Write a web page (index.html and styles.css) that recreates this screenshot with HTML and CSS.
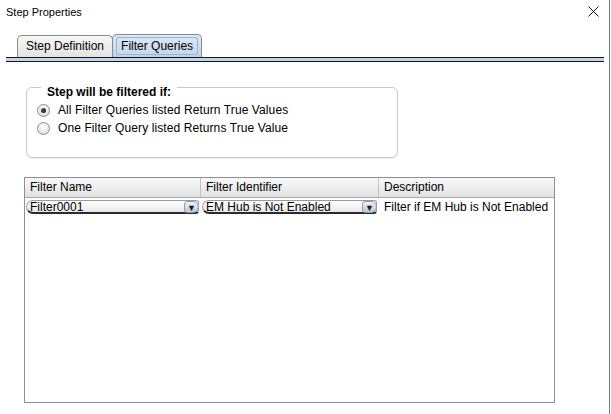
FILE: index.html
```html
<!DOCTYPE html>
<html lang="en">
<head>
    <meta charset="UTF-8">
    <title>Step Properties</title>
    <link rel="stylesheet" href="styles.css">
</head>
<body>
    <div class="janela">
        <div class="titulo">
            <span>Step Properties</span>
            <svg class="fechar" width="11" height="11" viewBox="0 0 11 11">
                <path d="M0.5 0.5 L10.5 10.5 M10.5 0.5 L0.5 10.5" stroke="#111" stroke-width="1" fill="none"/>
            </svg>
        </div>

        <div class="abas">
            <div class="aba">Step Definition</div>
            <div class="aba ativa"><span class="foco">Filter Queries</span></div>
        </div>
        <div class="linha-abas"></div>

        <div class="conteudo">
            <div class="grupo">
                <span class="legenda">Step will be filtered if:</span>
                <label class="opcao"><span class="radio marcado"></span>All Filter Queries listed Return True Values</label>
                <label class="opcao"><span class="radio"></span>One Filter Query listed Returns True Value</label>
            </div>

            <div class="tabela">
                <div class="cabecalho">
                    <div class="col">Filter Name</div>
                    <div class="col">Filter Identifier</div>
                    <div class="col">Description</div>
                </div>
                <div class="linha">
                    <div class="celula">
                        <div class="combo"><span class="valor">Filter0001</span><span class="seta">&#9660;</span></div>
                    </div>
                    <div class="celula">
                        <div class="combo"><span class="valor">EM Hub is Not Enabled</span><span class="seta">&#9660;</span></div>
                    </div>
                    <div class="celula texto">Filter if EM Hub is Not Enabled</div>
                </div>
            </div>
        </div>
    </div>
</body>
</html>
```

FILE: styles.css
```css
body {
    margin: 0;
    background: #fff;
    font-family: 'Liberation Sans', Arial, sans-serif;
    font-size: 12px;
    color: #000;
}

.janela {
    width: 609px;
    height: 414px;
    border-right: 1px solid #7a7a7a;
    background: #fff;
}

.titulo {
    height: 26px;
    padding: 0 10px 0 6px;
    display: flex;
    align-items: center;
    justify-content: space-between;
    font-size: 11px;
    box-sizing: border-box;
}

.titulo span {
    margin-top: -2px;
}

.fechar {
    margin-top: -3px;
}

.abas {
    display: flex;
    align-items: flex-end;
    height: 23px;
    margin-top: 8px;
    padding-left: 17px;
}

.aba {
    height: 22px;
    line-height: 21px;
    padding: 0 8px;
    border: 1px solid #8c8c8c;
    border-bottom: none;
    border-radius: 5px 5px 0 0;
    background: linear-gradient(#f7f7f7, #e3e3e3);
    box-sizing: border-box;
}

.aba.ativa {
    height: 23px;
    padding: 2px 3px 0 3px;
    margin-left: -1px;
    background: linear-gradient(#dde9f5, #bfd3e8);
    border-color: #7f8c99;
}

.foco {
    display: block;
    height: 18px;
    line-height: 16px;
    padding: 0 4px;
    border: 1px solid #9ab5d2;
    border-radius: 2px;
    box-sizing: border-box;
    background: linear-gradient(#d9e6f3, #c6d8ea);
}

.linha-abas {
    height: 3px;
    margin: 0 5px 0 6px;
    border-top: 1px solid #14161c;
    border-bottom: 1px solid #14161c;
    background: #c2d5e8;
}

.conteudo {
    padding: 25px 0 0 24px;
}

.grupo {
    position: relative;
    width: 372px;
    height: 71px;
    margin-left: 2px;
    padding: 13px 0 0 10px;
    border: 1px solid #c9c9c9;
    border-radius: 6px;
    box-sizing: border-box;
    box-shadow: 0 1px 1px #ececec;
}

.legenda {
    position: absolute;
    top: -3px;
    left: 14px;
    padding: 0 6px;
    line-height: 14px;
    font-weight: bold;
    background: #fff;
}

.opcao {
    display: flex;
    align-items: center;
    height: 18px;
    gap: 8px;
    letter-spacing: 0.1px;
}

.radio {
    width: 13px;
    height: 13px;
    border-radius: 50%;
    border: 1px solid #8d8d8d;
    box-sizing: border-box;
    background: radial-gradient(circle at 50% 35%, #ffffff, #e4e4e4 70%, #cfcfcf);
    position: relative;
}

.radio.marcado::after {
    content: '';
    position: absolute;
    left: 3px;
    top: 3px;
    width: 5px;
    height: 5px;
    border-radius: 50%;
    background: radial-gradient(circle at 40% 35%, #4a5562, #111);
}

.tabela {
    width: 529px;
    height: 224px;
    margin-top: 19px;
    border: 1px solid #8d8fa0;
}

.cabecalho {
    display: grid;
    grid-template-columns: 176px 178px 175px;
    height: 19px;
    border-bottom: 1px solid #a9a9a9;
    background: linear-gradient(#f9f9f9, #e2e2e2);
}

.cabecalho .col {
    padding-left: 5px;
    line-height: 19px;
    border-right: 1px solid #c3c3c3;
}

.cabecalho .col:last-child {
    border-right: none;
}

.linha {
    display: grid;
    grid-template-columns: 176px 178px 175px;
    height: 18px;
    align-items: center;
}

.celula {
    padding: 0 2px 0 1px;
}

.celula.texto {
    padding-left: 5px;
    white-space: nowrap;
}

.combo {
    display: flex;
    align-items: center;
    height: 14px;
    border: 1px solid #9a9a9a;
    border-bottom: 2px solid #2b2b2b;
    border-radius: 7px 3px 3px 7px;
    background: linear-gradient(#ffffff, #e9e9e9);
    box-sizing: border-box;
}

.valor {
    flex: 1;
    padding-left: 3px;
    line-height: 12px;
    white-space: nowrap;
    overflow: hidden;
}

.seta {
    width: 15px;
    height: 12px;
    margin-right: -1px;
    font-size: 9px;
    line-height: 12px;
    text-align: center;
    color: #1d1d1d;
    border: 1px solid #8f9cab;
    border-radius: 3px 6px 6px 3px;
    box-sizing: border-box;
    background: linear-gradient(#eef3f8, #bccad8);
}
```
